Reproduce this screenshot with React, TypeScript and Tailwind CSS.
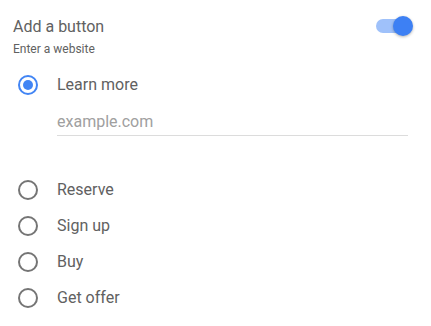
import { useState } from 'react'

const OPTIONS = ['Reserve', 'Sign up', 'Buy', 'Get offer']

function Radio({ checked }: { checked: boolean }) {
  return (
    <span
      className={`flex h-[20px] w-[20px] shrink-0 items-center justify-center rounded-full border-2 ${
        checked ? 'border-[#4285f4]' : 'border-[#757575]'
      }`}
    >
      {checked && <span className="h-[10px] w-[10px] rounded-full bg-[#4285f4]" />}
    </span>
  )
}

export default function App() {
  const [choice, setChoice] = useState('Learn more')

  return (
    <div className="h-[326px] w-[431px] bg-white pl-[13px] pr-[18px] pt-[15px] font-['Roboto',sans-serif] text-[#616161]">
      {/* Header + toggle */}
      <div className="flex items-start justify-between">
        <div>
          <p className="text-[16px] leading-[24px]">Add a button</p>
          <p className="mt-[2px] text-[12px] leading-[16px]">Enter a website</p>
        </div>
        <div className="relative mt-[1px] h-[20px] w-[37px]">
          <span className="absolute left-0 top-[3px] h-[14px] w-[34px] rounded-full bg-[#9fc1fa]" />
          <span className="absolute right-0 top-0 h-[20px] w-[20px] rounded-full bg-[#3d80f4] shadow-[0_1px_3px_rgba(0,0,0,0.3)]" />
        </div>
      </div>

      {/* Learn more + url */}
      <button
        className="mt-[10px] flex h-[36px] w-full items-center text-left"
        onClick={() => setChoice('Learn more')}
      >
        <span className="ml-[5px]">
          <Radio checked={choice === 'Learn more'} />
        </span>
        <span className="ml-[19px] text-[16px] leading-[24px]">Learn more</span>
      </button>
      <div className="ml-[44px] mr-[5px] mt-[7px] border-b border-[#dcdcdc] pb-[1px]">
        <p className="text-[16px] leading-[24px] text-[#a0a0a0]">example.com</p>
      </div>

      {/* Other options */}
      <div className="mt-[36px]">
        {OPTIONS.map((o) => (
          <button
            key={o}
            className="flex h-[36px] w-full items-center text-left"
            onClick={() => setChoice(o)}
          >
            <span className="ml-[5px]">
              <Radio checked={choice === o} />
            </span>
            <span className="ml-[19px] text-[16px] leading-[24px]">{o}</span>
          </button>
        ))}
      </div>
    </div>
  )
}
